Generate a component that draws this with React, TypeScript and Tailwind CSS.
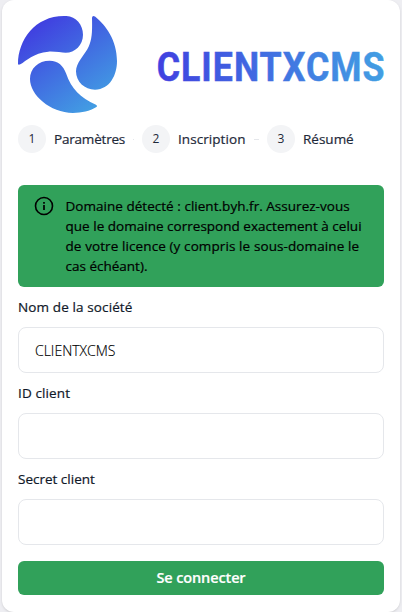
import React from "react";

function LogoMark() {
  return (
    <svg className="h-[97px] w-[99px] shrink-0" viewBox="54 48 297 291" aria-hidden="true">
      <defs>
        <linearGradient id="mark" gradientUnits="userSpaceOnUse" x1="110" y1="75" x2="290" y2="325">
          <stop offset="0" stopColor="#4040e0" />
          <stop offset="1" stopColor="#429fe3" />
        </linearGradient>
      </defs>
      <g fill="url(#mark)">
        <path d="M54 192C54 120 105 48 192 48C225 46 249 72 249 104C249 135 225 158 197 158C185 158 165 154 145 155C100 159 79 182 61 193Q55 196 54 192Z" />
        <path d="M276 53C277 100 276 122 262 148C252 166 228 190 228 214C228 246 254 269 285 269C330 268 351 225 351 183C351 120 317 75 286 50Q277 45 276 53Z" />
        <path d="M90 237C90 205 115 182 149 182C175 182 190 198 198 220C215 268 240 293 288 314Q294 318 288 322C270 333 245 339 219 339C150 338 90 285 90 237Z" />
      </g>
    </svg>
  );
}

function Wordmark() {
  return (
    <svg className="h-[60px] w-[236px] shrink-0" viewBox="0 0 236 60" role="img">
      <defs>
        <linearGradient id="word" gradientUnits="userSpaceOnUse" x1="0" y1="0" x2="266" y2="0">
          <stop offset="0" stopColor="#4040e0" />
          <stop offset="1" stopColor="#429fe3" />
        </linearGradient>
      </defs>
      <text
        x="0.8"
        y="46"
        transform="scale(0.86 1)"
        textLength="265"
        lengthAdjust="spacing"
        fill="url(#word)"
        stroke="url(#word)"
        strokeWidth="0.5"
        className="font-['Roboto',sans-serif] text-[41.5px] font-bold"
      >
        CLIENTXCMS
      </text>
    </svg>
  );
}

function Step({ n, label, className }: { n: number; label: string; className: string }) {
  return (
    <li className="flex items-center">
      <span className="flex size-7 items-center justify-center rounded-full bg-gray-100 text-xs font-medium text-gray-800">
        {n}
      </span>
      <span
        className={`ml-2 text-[13.5px] leading-5 font-medium whitespace-nowrap text-gray-800 [-webkit-text-stroke:0.2px_currentColor] ${className}`}
      >
        {label}
      </span>
    </li>
  );
}

function Field({ label, value, className }: { label: string; value: string; className: string }) {
  return (
    <label className="block h-[86px]">
      <span
        className={`block text-[13.5px] leading-5 font-medium text-gray-900 [-webkit-text-stroke:0.2px_currentColor] ${className}`}
      >
        {label}
      </span>
      <input
        defaultValue={value}
        className="mt-[10px] block h-[46px] w-full rounded-lg border border-gray-200 bg-white px-4 text-sm font-light text-black outline-none [-webkit-text-stroke:0.15px_currentColor]"
      />
    </label>
  );
}

export default function App() {
  return (
    <main className="h-[612px] w-[402px] overflow-hidden bg-[#eeeef2] px-0.5 font-['Open_Sans','Noto_Sans',sans-serif]">
      <div className="h-full rounded-xl bg-white px-4 pt-4 shadow-sm">
        <div className="flex h-[97px] items-center">
          <LogoMark />
          <div className="ml-[39px]">
            <Wordmark />
          </div>
        </div>
        <ol className="mt-3 flex h-7 items-center">
          <Step n={1} label="Paramètres" className="w-[71px] tracking-[-0.2px]" />
          <li className="mx-2 h-px w-px bg-gray-200" />
          <Step n={2} label="Inscription" className="w-[68px] tracking-[0.07px]" />
          <li className="mx-2 h-px w-[5px] bg-gray-200" />
          <Step n={3} label="Résumé" className="w-[52px]" />
        </ol>
        <div className="mt-8 flex h-[102px] rounded-md bg-[#31a15a] pt-[11px] pl-4 text-black">
          <svg className="size-5 shrink-0" viewBox="0 0 20 20" fill="none" stroke="currentColor">
            <circle cx="10" cy="10" r="8.5" strokeWidth="1.6" />
            <path d="M10 9v5M10 6v1.7" strokeWidth="1.7" />
          </svg>
          <p className="ml-[11.5px] text-[13.5px] leading-5 font-medium whitespace-nowrap [-webkit-text-stroke:0.2px_currentColor]">
            <span className="block tracking-[0.03px]">Domaine détecté : client.byh.fr. Assurez-vous</span>
            <span className="block tracking-[0.02px]">que le domaine correspond exactement à celui</span>
            <span className="block tracking-[0.1px]">de votre licence (y compris le sous-domaine le</span>
            <span className="block">cas échéant).</span>
          </p>
        </div>
        <form className="pt-[10px]">
          <Field label="Nom de la société" value="CLIENTXCMS" className="tracking-[0.12px]" />
          <Field label="ID client" value="" className="tracking-[0.12px]" />
          <Field label="Secret client" value="" className="" />
          <button
            type="button"
            className="mt-[6px] block h-[34px] w-full rounded-md bg-[#31a15a] text-[14.5px] font-semibold tracking-[-0.12px] text-white [-webkit-text-stroke:0.2px_currentColor]"
          >
            Se connecter
          </button>
        </form>
      </div>
    </main>
  );
}
